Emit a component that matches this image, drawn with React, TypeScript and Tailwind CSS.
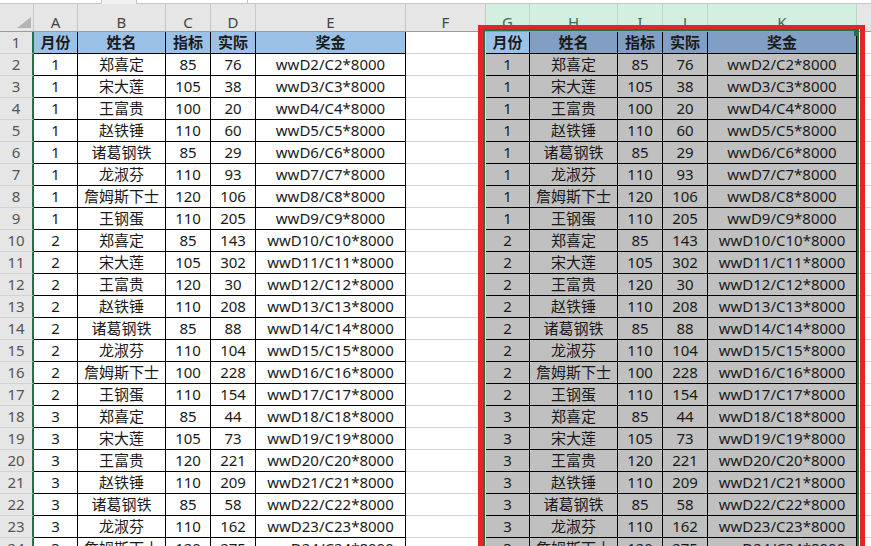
const rawRows: [number, string, number, number][] = [
  [1, "郑喜定", 85, 76],
  [1, "宋大莲", 105, 38],
  [1, "王富贵", 100, 20],
  [1, "赵铁锤", 110, 60],
  [1, "诸葛钢铁", 85, 29],
  [1, "龙淑芬", 110, 93],
  [1, "詹姆斯下士", 120, 106],
  [1, "王钢蛋", 110, 205],
  [2, "郑喜定", 85, 143],
  [2, "宋大莲", 105, 302],
  [2, "王富贵", 120, 30],
  [2, "赵铁锤", 110, 208],
  [2, "诸葛钢铁", 85, 88],
  [2, "龙淑芬", 110, 104],
  [2, "詹姆斯下士", 100, 228],
  [2, "王钢蛋", 110, 154],
  [3, "郑喜定", 85, 44],
  [3, "宋大莲", 105, 73],
  [3, "王富贵", 120, 221],
  [3, "赵铁锤", 110, 209],
  [3, "诸葛钢铁", 85, 58],
  [3, "龙淑芬", 110, 162],
  [3, "詹姆斯下士", 120, 275],
];

const headers = ["月份", "姓名", "指标", "实际", "奖金"];

const rows = rawRows.map((r, i) => [
  String(r[0]),
  r[1],
  String(r[2]),
  String(r[3]),
  `wwD${i + 2}/C${i + 2}*8000`,
]);

const leftW = ["w-[44px]", "w-[88px]", "w-[45px]", "w-[45px]", "w-[150px]"];
const rightW = ["w-[44px]", "w-[88px]", "w-[45px]", "w-[45px]", "w-[149px]"];

const ColHeader = () => {
  const left = ["A", "B", "C", "D", "E"];
  const right = ["G", "H", "I", "J", "K"];
  return (
    <div className="flex h-[28px] bg-[#e6e6e6] border-b border-[#9c9c9c] text-[15px] leading-none text-[#444]">
      <div className="w-[34px] shrink-0 border-r border-[#c8c8c8] flex items-end justify-end pb-[3px] pr-[2px]">
        <svg width="14" height="11" viewBox="0 0 14 11">
          <polygon points="14,0 14,11 0,11" fill="#b4b4b4" />
        </svg>
      </div>
      {left.map((l, i) => (
        <div
          key={l}
          className={`${leftW[i]} shrink-0 border-r border-[#c8c8c8] flex items-end justify-center pb-[1px]`}
        >
          {l}
        </div>
      ))}
      <div className="w-[80px] shrink-0 border-r border-[#c8c8c8] flex items-end justify-center pb-[1px]">
        F
      </div>
      {right.map((l, i) => (
        <div
          key={l}
          className={`${rightW[i]} shrink-0 border-r border-[#b9d9c6] bg-[#d3efdf] text-[#3d6b52] flex items-end justify-center pb-[1px]`}
        >
          {l}
        </div>
      ))}
      <div className="w-[80px] shrink-0 border-r border-[#c8c8c8]"></div>
    </div>
  );
};

const Row = ({ n, cells, head }: { n: number; cells: string[]; head?: boolean }) => (
  <div className="flex h-[22px] text-[15px] leading-none">
    <div className="w-[34px] shrink-0 bg-[#e6e6e6] border-r-2 border-r-[#217346] border-b border-b-[#d2d2d2] flex items-center justify-center text-[#555]">
      {n}
    </div>
    {cells.map((c, i) => (
      <div
        key={"l" + i}
        className={`${leftW[i]} shrink-0 border-r border-b border-black flex items-center justify-center whitespace-nowrap ${
          head ? "bg-[#9bc2e6] font-bold" : "bg-white"
        }`}
      >
        {c}
      </div>
    ))}
    <div className="w-[80px] shrink-0 border-r border-b border-[#d4d4d4]"></div>
    {cells.map((c, i) => (
      <div
        key={"r" + i}
        className={`${rightW[i]} shrink-0 border-r border-b border-black flex items-center justify-center whitespace-nowrap ${
          head ? (i === 0 ? "bg-[#9bc2e6] font-bold" : "bg-[#809fc3] font-bold") : "bg-[#c0c0c0]"
        }`}
      >
        {c}
      </div>
    ))}
    <div className="w-[80px] shrink-0 border-r border-b border-[#d4d4d4]"></div>
  </div>
);

export default function App() {
  return (
    <div className="relative w-[871px] h-[546px] overflow-hidden bg-white text-[#1a1a1a] font-['Noto_Sans','Noto_Sans_CJK_SC',sans-serif]">
      <div className="flex h-[4px] bg-[#f0f0f0]">
        <div className="w-[102px] bg-white border-r border-b border-[#c6c6c6]"></div>
        <div className="w-[34px]"></div>
        <div className="w-[112px] bg-white border-x border-b border-[#c6c6c6]"></div>
        <div className="flex-1 bg-white border-b border-[#c6c6c6]"></div>
      </div>
      <ColHeader />
      <Row n={1} cells={headers} head />
      {rows.map((r, i) => (
        <Row key={i} n={i + 2} cells={r} />
      ))}
      <div className="absolute left-[478px] top-[25px] w-[387px] h-[560px] border-[5px] border-t-4 border-[#e3242b]"></div>
      <div className="absolute left-[483px] top-[29px] w-[376px] h-[560px] border-2 border-[#217346]"></div>
      <div className="absolute left-[854px] top-[31px] w-[5px] h-[5px] bg-[#217346]"></div>
    </div>
  );
}
